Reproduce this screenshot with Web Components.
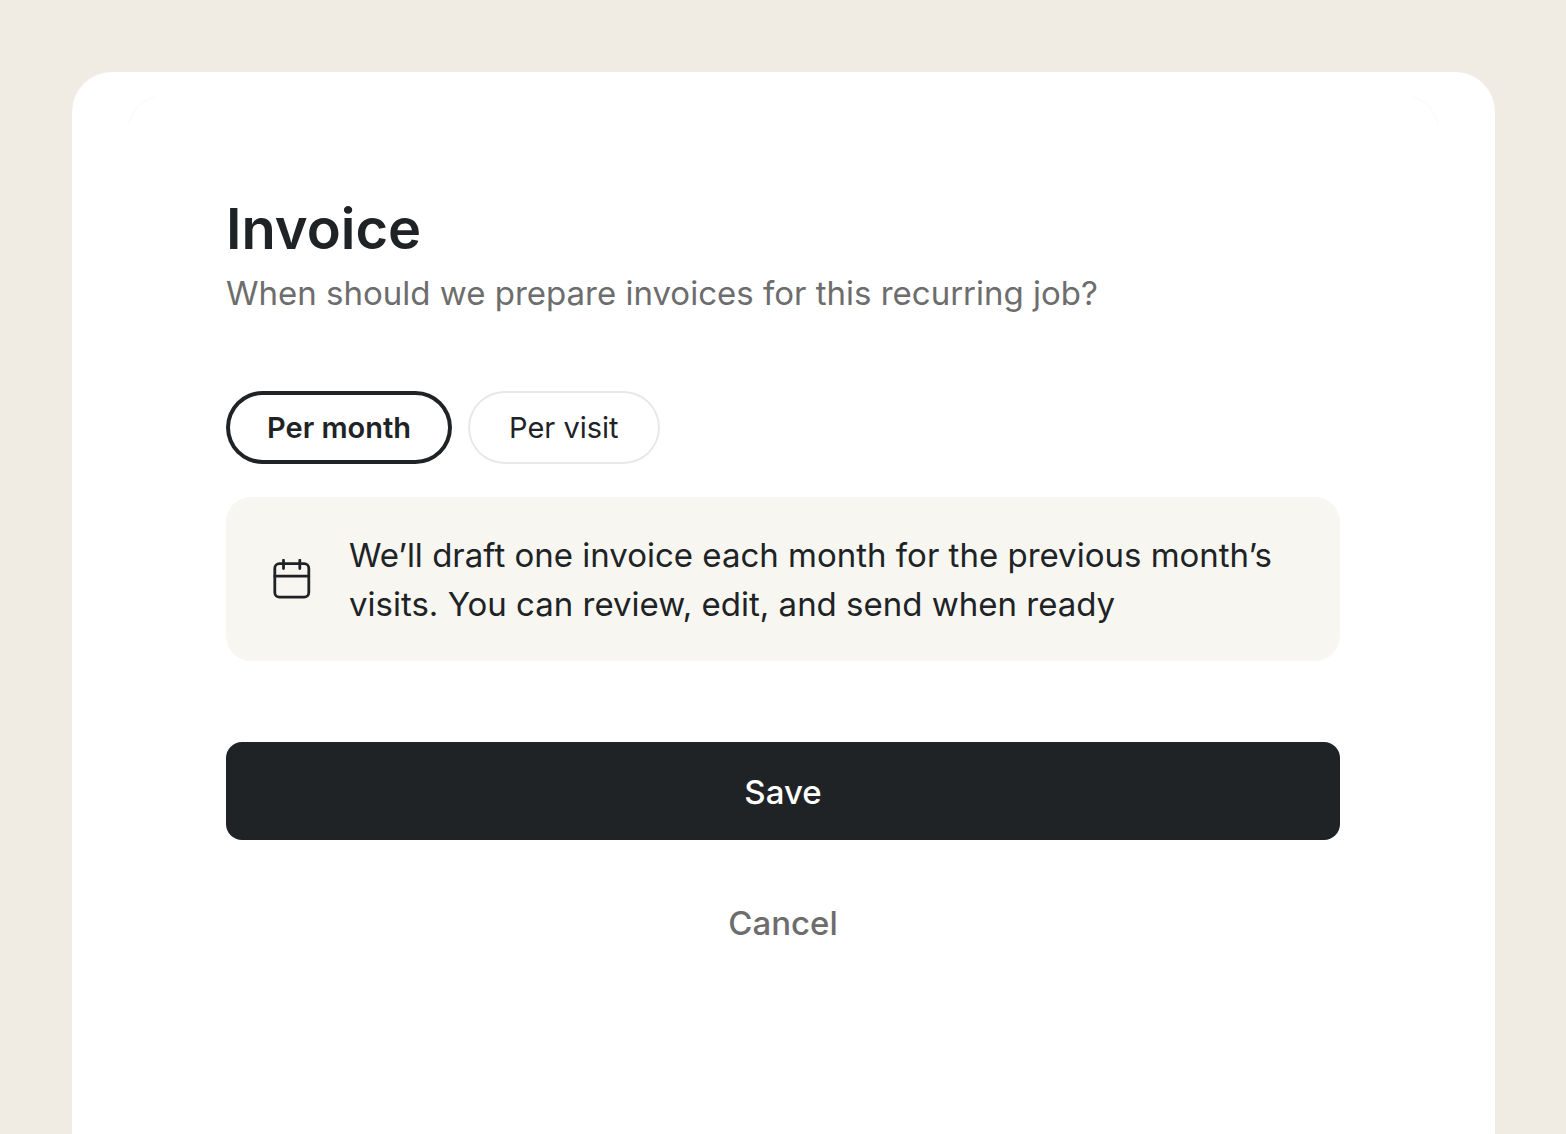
<!DOCTYPE html>
<html lang="en">
<head>
<meta charset="utf-8">
<meta name="viewport" content="width=device-width, initial-scale=1">
<title>Invoice</title>
<style>
  :root {
    --ink: #202326;
    --muted: #6d6d6d;
    --line: #e8e8e8;
    --canvas: #f0ece4;
    --note: #f7f6f1;
  }
  * { box-sizing: border-box; }
  body {
    margin: 0;
    background: var(--canvas);
    color: var(--ink);
    font-family: Inter, "Liberation Sans", sans-serif;
    font-size: 33px;
    line-height: 49px;
  }
</style>
</head>
<body>
<invoice-page>
  <invoice-sheet>
    <sheet-heading>
      <span slot="title">Invoice</span>
      <span slot="subtitle">When should we prepare invoices for this recurring job?</span>
    </sheet-heading>
    <pill-choice></pill-choice>
    <info-note>We’ll draft one invoice each month for the previous month’s visits. You can review, edit, and send when ready</info-note>
    <sheet-actions>
      <action-button kind="primary">Save</action-button>
      <action-button kind="plain">Cancel</action-button>
    </sheet-actions>
  </invoice-sheet>
</invoice-page>
<script>
  const define = (name, html) => {
    const template = document.createElement('template');
    template.innerHTML = html;
    customElements.define(name, class extends HTMLElement {
      constructor() {
        super();
        this.attachShadow({ mode: 'open' }).append(template.content.cloneNode(true));
      }
    });
  };

  define('invoice-page', `
    <style>
      :host { display: flex; box-sizing: border-box; min-height: 100vh; padding: 72px 71px 0 72px; }
      main { flex: 1; min-width: 0; display: flex; }
    </style>
    <main><slot></slot></main>`);

  define('invoice-sheet', `
    <style>
      :host { flex: 1; min-width: 0; display: block; position: relative; box-sizing: border-box;
        padding: 121px 155px 121px 154px; background: #fff; border-radius: 40px 40px 0 0; }
      svg { position: absolute; top: 24px; width: 28px; height: 28px; fill: none; stroke: #f9f9f9; }
      .left { left: 56px; }
      .right { right: 56px; }
    </style>
    <svg class="left" viewBox="0 0 28 28" aria-hidden="true"><path d="M.5 28C5 14 12 5 27 .5"/></svg>
    <svg class="right" viewBox="0 0 28 28" aria-hidden="true"><path d="M27.5 28C23 14 16 5 1 .5"/></svg>
    <slot></slot>`);

  define('sheet-heading', `
    <style>
      :host { display: block; }
      h1 { margin: 0 0 4px; font-size: 56px; line-height: 72px; font-weight: 600; }
      p { margin: 0; color: var(--muted); }
    </style>
    <h1><slot name="title"></slot></h1>
    <p><slot name="subtitle"></slot></p>`);

  define('pill-choice', `
    <style>
      :host { display: block; margin-top: 73px; }
      fieldset { display: flex; flex-wrap: wrap; gap: 16px; margin: 0; padding: 0; border: 0; min-width: 0; }
      label { position: relative; padding: 12px 41px; border-radius: 37px; cursor: pointer;
        font-size: 29px; box-shadow: inset 0 0 0 2px var(--line); }
      label:has(:checked) { font-weight: 600; box-shadow: inset 0 0 0 4px var(--ink); }
      input { position: absolute; inset: 0; width: 100%; height: 100%; margin: 0; opacity: 0; cursor: pointer; }
    </style>
    <fieldset aria-label="Invoice frequency">
      <label for="month"><input type="radio" id="month" name="frequency" checked>Per month</label>
      <label for="visit"><input type="radio" id="visit" name="frequency">Per visit</label>
    </fieldset>`);

  define('info-note', `
    <style>
      :host { display: flex; align-items: center; gap: 37px; margin-top: 33px; padding: 34px 46px 32px;
        background: var(--note); border-radius: 25px; }
      svg { flex: none; width: 40px; height: 42px; fill: none; stroke: var(--ink); stroke-width: 2.8; stroke-linecap: round; }
      p { margin: 0; }
    </style>
    <svg viewBox="0 0 40 42" aria-hidden="true">
      <rect x="2.8" y="4.6" width="34" height="33.6" rx="4.6"/>
      <path d="M2.8 17.2h34M11.5 1.2v8.4M27.8 1.2v8.4"/>
    </svg>
    <p><slot></slot></p>`);

  define('sheet-actions', `
    <style>
      :host { display: flex; flex-direction: column; gap: 33px; margin-top: 81px; }
    </style>
    <slot></slot>`);

  define('action-button', `
    <style>
      :host { display: block; }
      button { display: block; width: 100%; margin: 0; padding: 26px 32px 23px; border: 0; border-radius: 16px;
        background: transparent; color: var(--muted); font: inherit; font-weight: 500; cursor: pointer; }
      :host([kind="primary"]) button { background: var(--ink); color: #fff; }
    </style>
    <button type="button"><slot></slot></button>`);
</script>
</body>
</html>
